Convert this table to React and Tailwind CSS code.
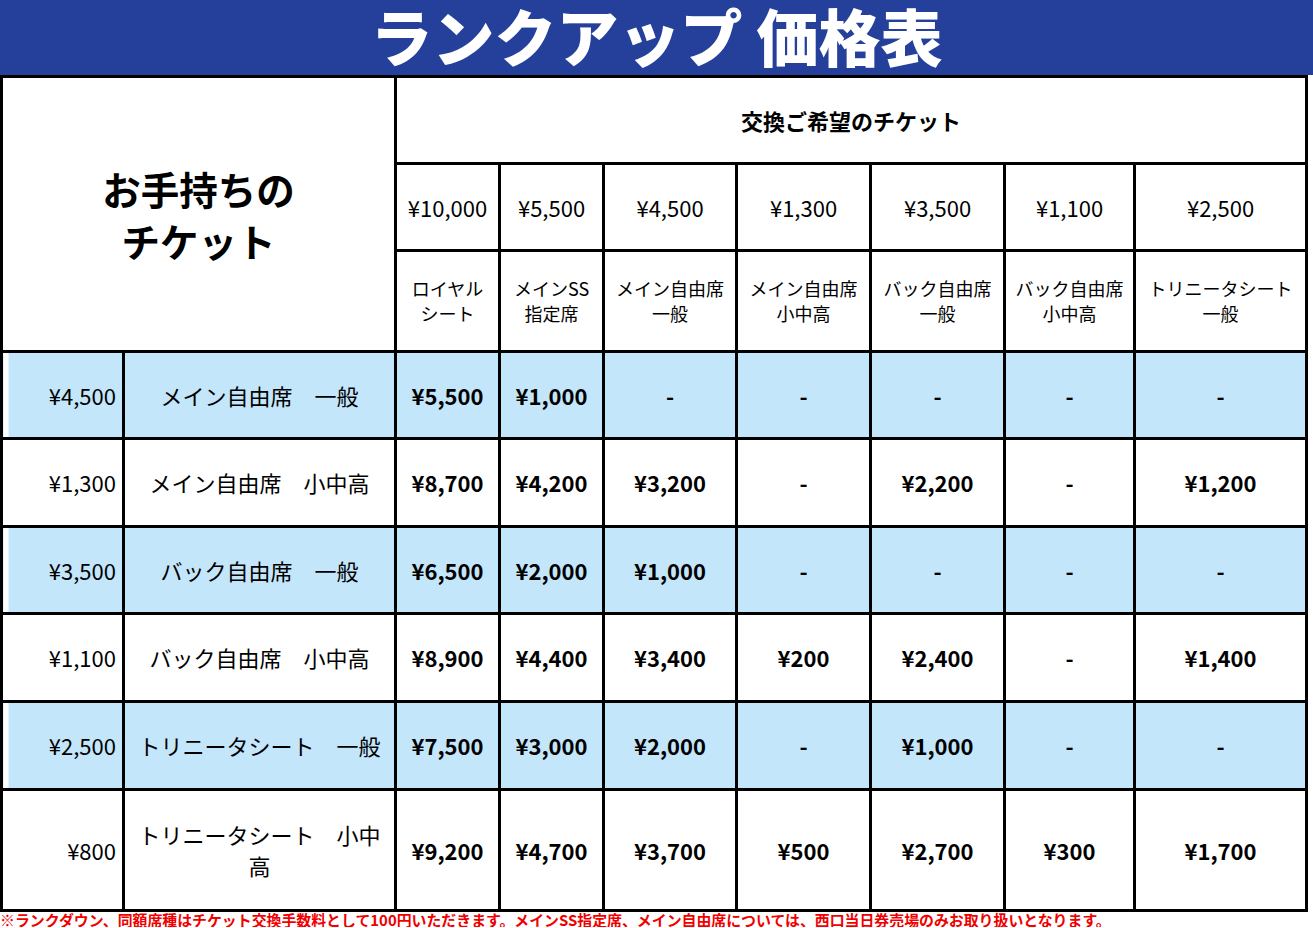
const prices = ["¥10,000", "¥5,500", "¥4,500", "¥1,300", "¥3,500", "¥1,100", "¥2,500"];
const seats = [
  ["ロイヤル", "シート"],
  ["メインSS", "指定席"],
  ["メイン自由席", "一般"],
  ["メイン自由席", "小中高"],
  ["バック自由席", "一般"],
  ["バック自由席", "小中高"],
  ["トリニータシート", "一般"],
];

const rows = [
  { own: "¥4,500", name: "メイン自由席　一般", blue: true, h: "h-[87px]", vals: ["¥5,500", "¥1,000", "-", "-", "-", "-", "-"] },
  { own: "¥1,300", name: "メイン自由席　小中高", h: "h-[88px]", vals: ["¥8,700", "¥4,200", "¥3,200", "-", "¥2,200", "-", "¥1,200"] },
  { own: "¥3,500", name: "バック自由席　一般", blue: true, h: "h-[87px]", vals: ["¥6,500", "¥2,000", "¥1,000", "-", "-", "-", "-"] },
  { own: "¥1,100", name: "バック自由席　小中高", h: "h-[88px]", vals: ["¥8,900", "¥4,400", "¥3,400", "¥200", "¥2,400", "-", "¥1,400"] },
  { own: "¥2,500", name: "トリニータシート　一般", blue: true, h: "h-[88px]", vals: ["¥7,500", "¥3,000", "¥2,000", "-", "¥1,000", "-", "-"] },
  { own: "¥800", name: "トリニータシート　小中高", h: "h-[121px]", vals: ["¥9,200", "¥4,700", "¥3,700", "¥500", "¥2,700", "¥300", "¥1,700"] },
];

const cell = "border-[3px] border-black p-0";

export default function App() {
  return (
    <div className="w-[1313px] bg-white text-black font-['Noto_Sans_CJK_JP',sans-serif]">
      <div className="h-[75px] bg-[#24409a] flex items-center justify-center pb-[5px]">
        <h1 className="text-white text-[62px] leading-[64px] font-black">ランクアップ 価格表</h1>
      </div>

      <table className="border-collapse table-fixed w-[1305px]">
        <colgroup>
          <col className="w-[122px]" />
          <col className="w-[272px]" />
          <col className="w-[104px]" />
          <col className="w-[104px]" />
          <col className="w-[133px]" />
          <col className="w-[134px]" />
          <col className="w-[134px]" />
          <col className="w-[130px]" />
          <col className="w-[172px]" />
        </colgroup>
        <thead>
          <tr className="h-[87px]">
            <th rowSpan={3} colSpan={2} className={`${cell} text-[38.5px] leading-[52px] font-bold`}>
              お手持ちの<br />チケット
            </th>
            <th colSpan={7} className={`${cell} text-[22px] font-bold`}>交換ご希望のチケット</th>
          </tr>
          <tr className="h-[87px]">
            {prices.map((p) => (
              <th key={p} className={`${cell} text-[22px] font-normal`}>{p}</th>
            ))}
          </tr>
          <tr className="h-[101px]">
            {seats.map((s, i) => (
              <th key={i} className={`${cell} text-[18px] leading-[25px] font-normal`}>
                {s[0]}<br />{s[1]}
              </th>
            ))}
          </tr>
        </thead>
        <tbody>
          {rows.map((r) => (
            <tr key={r.own} className={`${r.h} ${r.blue ? "bg-[#c3e6fb]" : "bg-white"}`}>
              <td className={`${cell} text-right pr-[6px] text-[22px] ${r.blue ? "bg-[linear-gradient(to_right,white_5px,#c3e6fb_5px)]" : ""}`}>{r.own}</td>
              <td className={`${cell} text-center px-[6px] text-[22px] leading-[31px]`}>{r.name}</td>
              {r.vals.map((v, i) => (
                <td key={i} className={`${cell} text-center text-[22px] font-bold`}>{v}</td>
              ))}
            </tr>
          ))}
        </tbody>
      </table>

      <p className="text-[14.9px] leading-[15px] font-bold text-[#f00000] whitespace-nowrap">
        ※ランクダウン、同額席種はチケット交換手数料として100円いただきます。メインSS指定席、メイン自由席については、西口当日券売場のみお取り扱いとなります。
      </p>
    </div>
  );
}
